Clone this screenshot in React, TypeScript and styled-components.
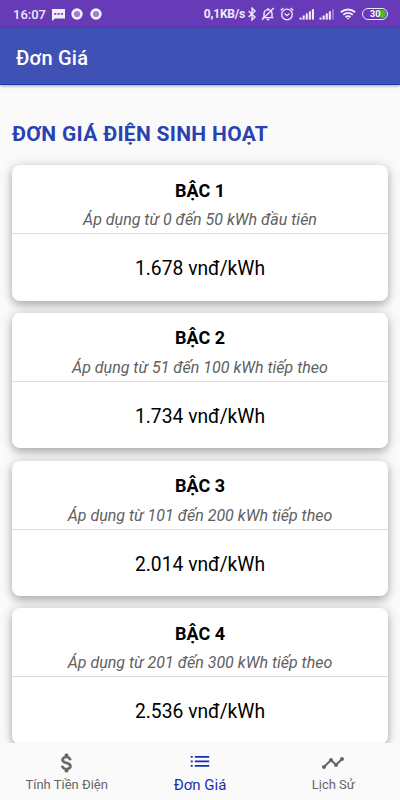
import React from "react";
import styled, { createGlobalStyle } from "styled-components";
import { MdTimeline } from "react-icons/md";

const GlobalStyle = createGlobalStyle`
  * { box-sizing: border-box; }
  body { margin: 0; font-family: Roboto, "Noto Sans", sans-serif; background: #fafafa; }
`;

const Screen = styled.div`
  width: 400px;
  height: 800px;
  display: flex;
  flex-direction: column;
  overflow: hidden;
  background: #fafafa;
`;

const StatusBar = styled.div`
  flex: none;
  height: 28px;
  padding: 0 12px 0 13px;
  display: flex;
  justify-content: space-between;
  align-items: center;
  background: #673ab7;
  color: #f0eaf8;
`;

const StatusGroup = styled.div`
  display: flex;
  align-items: center;
  svg { display: block; flex: none; }
`;

const Clock = styled.span`
  width: 39px;
  font-size: 13px;
  font-weight: 500;
  line-height: 29px;
`;

const Speed = styled.span`
  font-size: 12px;
  font-weight: 700;
  letter-spacing: -0.2px;
  line-height: 29px;
  white-space: nowrap;
`;

const AppBar = styled.header`
  flex: none;
  height: 57px;
  padding: 0 16px;
  display: flex;
  align-items: center;
  background: #3f51b5;
  border-bottom: 1px solid #1c36ac;
  box-shadow: 0 1px 3px rgba(0, 0, 0, 0.35);
  color: #fff;
  z-index: 1;
`;

const AppTitle = styled.h1`
  margin: 3px 0 0;
  font-size: 20px;
  letter-spacing: 0.25px;
  font-weight: 500;
  line-height: 24px;
`;

const Content = styled.main`
  flex: 1;
  min-height: 0;
  overflow: hidden;
  padding: 34px 12px 0;
`;

const Heading = styled.h2`
  margin: 0 0 18px;
  height: 28px;
  font-size: 21px;
  font-weight: 700;
  letter-spacing: 0.3px;
  line-height: 30px;
  color: #2a41b3;
  white-space: nowrap;
`;

const CardList = styled.div`
  display: flex;
  flex-direction: column;
  gap: 12.2px;
`;

const Card = styled.section`
  flex: none;
  height: 135.6px;
  border-radius: 8px;
  background: #fff;
  box-shadow: 0 4px 9px rgba(0, 0, 0, 0.26), 0 0 14px rgba(0, 0, 0, 0.12);
  text-align: center;
  white-space: nowrap;
`;

const CardHeader = styled.div`
  height: 69px;
  padding-top: 13.6px;
  border-bottom: 1px solid #dcdcdc;
`;

const Tier = styled.h3`
  margin: 0;
  font-size: 18px;
  font-weight: 700;
  line-height: 24px;
  color: #000;
`;

const Range = styled.p`
  margin: 5.4px 0 0;
  font-size: 16px;
  font-style: italic;
  line-height: 24px;
  color: #606060;
`;

const Price = styled.p`
  margin: 0;
  font-size: 19.3px;
  line-height: 69.5px;
  color: #000;
`;

const BottomNav = styled.nav`
  flex: none;
  height: 57px;
  display: grid;
  grid-template-columns: repeat(3, 1fr);
  background: #fafafa;
  z-index: 1;
`;

const NavItem = styled.a<{ $active?: boolean }>`
  display: flex;
  flex-direction: column;
  align-items: center;
  padding-top: 8px;
  color: ${(p) => (p.$active ? "#1a2fae" : "#666")};
  font-size: ${(p) => (p.$active ? "15px" : "13px")};
  line-height: 20px;
  white-space: nowrap;
  svg { display: block; }
`;

const DollarIcon = () => (
  <svg width="24" height="24" viewBox="0 0 24 24" fill="currentColor" stroke="currentColor" strokeWidth="0.6">
    <path d="M11.8 10.9c-2.27-.59-3-1.2-3-2.15 0-1.09 1.01-1.85 2.7-1.85 1.78 0 2.44.85 2.5 2.1h2.21c-.07-1.72-1.12-3.3-3.21-3.81V3h-3v2.16c-1.94.42-3.5 1.68-3.5 3.61 0 2.31 1.91 3.46 4.7 4.13 2.5.6 3 1.48 3 2.41 0 .69-.49 1.79-2.7 1.79-2.06 0-2.87-.92-2.98-2.1h-2.2c.12 2.19 1.76 3.42 3.68 3.83V21h3v-2.15c1.95-.37 3.5-1.5 3.5-3.55 0-2.84-2.43-3.81-4.7-4.4z" />
  </svg>
);

const ListIcon = () => (
  <svg width="20" height="24" viewBox="0 0 20 24" fill="currentColor">
    {[5, 9.5, 14].map((y) => (
      <path key={y} d={`M.7 ${y}h2v1.8h-2zM4.8 ${y}h14.4v1.8H4.8z`} />
    ))}
  </svg>
);

const MessageIcon = () => (
  <svg width="13" height="13" viewBox="0 0 13 13">
    <path d="M0 1h13v9.5H3L0 13z" fill="#f3effa" />
    <path d="M2.3 5h2v1.8h-2zM5.6 5h2v1.8h-2zM8.9 5h2v1.8h-2z" fill="#673ab7" />
  </svg>
);

const BluetoothIcon = () => (
  <svg width="14" height="14" viewBox="0 0 14 14" fill="none" stroke="currentColor" strokeWidth="1.4">
    <path d="M3.6 4l6.4 6-3 2.9V1.1L10 4l-6.4 6" />
  </svg>
);

const Record = () => (
  <svg width="12" height="12" viewBox="0 0 12 12">
    <circle cx="6" cy="6" r="4.4" fill="#9c80d0" stroke="#f3effa" strokeWidth="2.6" />
  </svg>
);

const MutedBell = () => (
  <svg width="14" height="14" viewBox="0 0 14 14" fill="none" stroke="currentColor" strokeWidth="1.4">
    <path d="M1.6 10.6h10.8M3 10.5V7C3 4.2 4.6 2.8 7 2.6c2.4.2 4 1.6 4 4.4v3.5M7 1v1.5M5.7 12.5h2.6M1 12.8L12.8 1" />
  </svg>
);

const Alarm = () => (
  <svg width="14" height="14" viewBox="0 0 14 14" fill="none" stroke="currentColor" strokeWidth="1.3">
    <circle cx="7" cy="7.5" r="5.3" />
    <path d="M4.6 6.6L7 8.7l2.4-2.1M.7 3.5l2.7-2.6M10.6.9l2.7 2.6" />
  </svg>
);

const Signal = ({ weak = false }: { weak?: boolean }) => (
  <svg width="16" height="12" viewBox="0 0 16 12" fill="currentColor">
    {[0, 1, 2, 3, 4].map((i) => (
      <rect key={i} x={0.5 + i * 3.1} y={9.6 - i * 2.1} width="2.1" height={2 + i * 2.1} opacity={weak && i > 3 ? 0.35 : 1} />
    ))}
  </svg>
);

const Wifi = () => (
  <svg width="16" height="12" viewBox="0 0 16 12" fill="none" stroke="currentColor" strokeWidth="1.9">
    <path d="M.8 4.3c4.2-3.8 10.2-3.8 14.4 0M3.2 6.9c2.8-2.5 6.8-2.5 9.6 0M5.5 9.2c1.5-1.3 3.5-1.3 5 0" />
    <path d="M6.7 10l1.3 1.7L9.3 10z" fill="currentColor" stroke="none" />
  </svg>
);

const Battery = styled.div`
  width: 26px;
  height: 12px;
  border: 1.4px solid #eee8f7;
  border-radius: 6px;
  padding: 1px;
  display: flex;
`;

const BatteryLevel = styled.div`
  flex: 1;
  border-radius: 5px;
  background: linear-gradient(90deg, #673ab7 72%, #43c01b 72%);
  color: #fff;
  padding-left: 6px;
  font-size: 9px;
  font-weight: 700;
  line-height: 8.5px;
`;

const Gap = styled.span<{ $w: number }>`
  flex: none;
  width: ${(p) => p.$w}px;
`;

const tiers = [
  { name: "BẬC 1", range: "Áp dụng từ 0 đến 50 kWh đầu tiên", price: "1.678" },
  { name: "BẬC 2", range: "Áp dụng từ 51 đến 100 kWh tiếp theo", price: "1.734" },
  { name: "BẬC 3", range: "Áp dụng từ 101 đến 200 kWh tiếp theo", price: "2.014" },
  { name: "BẬC 4", range: "Áp dụng từ 201 đến 300 kWh tiếp theo", price: "2.536" },
];

export default function App() {
  return (
    <Screen>
      <GlobalStyle />
      <StatusBar>
        <StatusGroup>
          <Clock>16:07</Clock>
          <MessageIcon />
          <Gap $w={6} />
          <Record />
          <Gap $w={7} />
          <Record />
        </StatusGroup>
        <StatusGroup>
          <Speed>0,1KB/s</Speed>
          <BluetoothIcon />
          <Gap $w={2} />
          <MutedBell />
          <Gap $w={5} />
          <Alarm />
          <Gap $w={5} />
          <Signal />
          <Gap $w={4} />
          <Signal weak />
          <Gap $w={5} />
          <Wifi />
          <Gap $w={6} />
          <Battery>
            <BatteryLevel>30</BatteryLevel>
          </Battery>
        </StatusGroup>
      </StatusBar>
      <AppBar>
        <AppTitle>Đơn Giá</AppTitle>
      </AppBar>
      <Content>
        <Heading>ĐƠN GIÁ ĐIỆN SINH HOẠT</Heading>
        <CardList>
          {tiers.map((t) => (
            <Card key={t.name}>
              <CardHeader>
                <Tier>{t.name}</Tier>
                <Range>{t.range}</Range>
              </CardHeader>
              <Price>{t.price} vnđ/kWh</Price>
            </Card>
          ))}
        </CardList>
      </Content>
      <BottomNav>
        <NavItem>
          <DollarIcon />
          Tính Tiền Điện
        </NavItem>
        <NavItem $active>
          <ListIcon />
          Đơn Giá
        </NavItem>
        <NavItem>
          <MdTimeline size={24} />
          Lịch Sử
        </NavItem>
      </BottomNav>
    </Screen>
  );
}
